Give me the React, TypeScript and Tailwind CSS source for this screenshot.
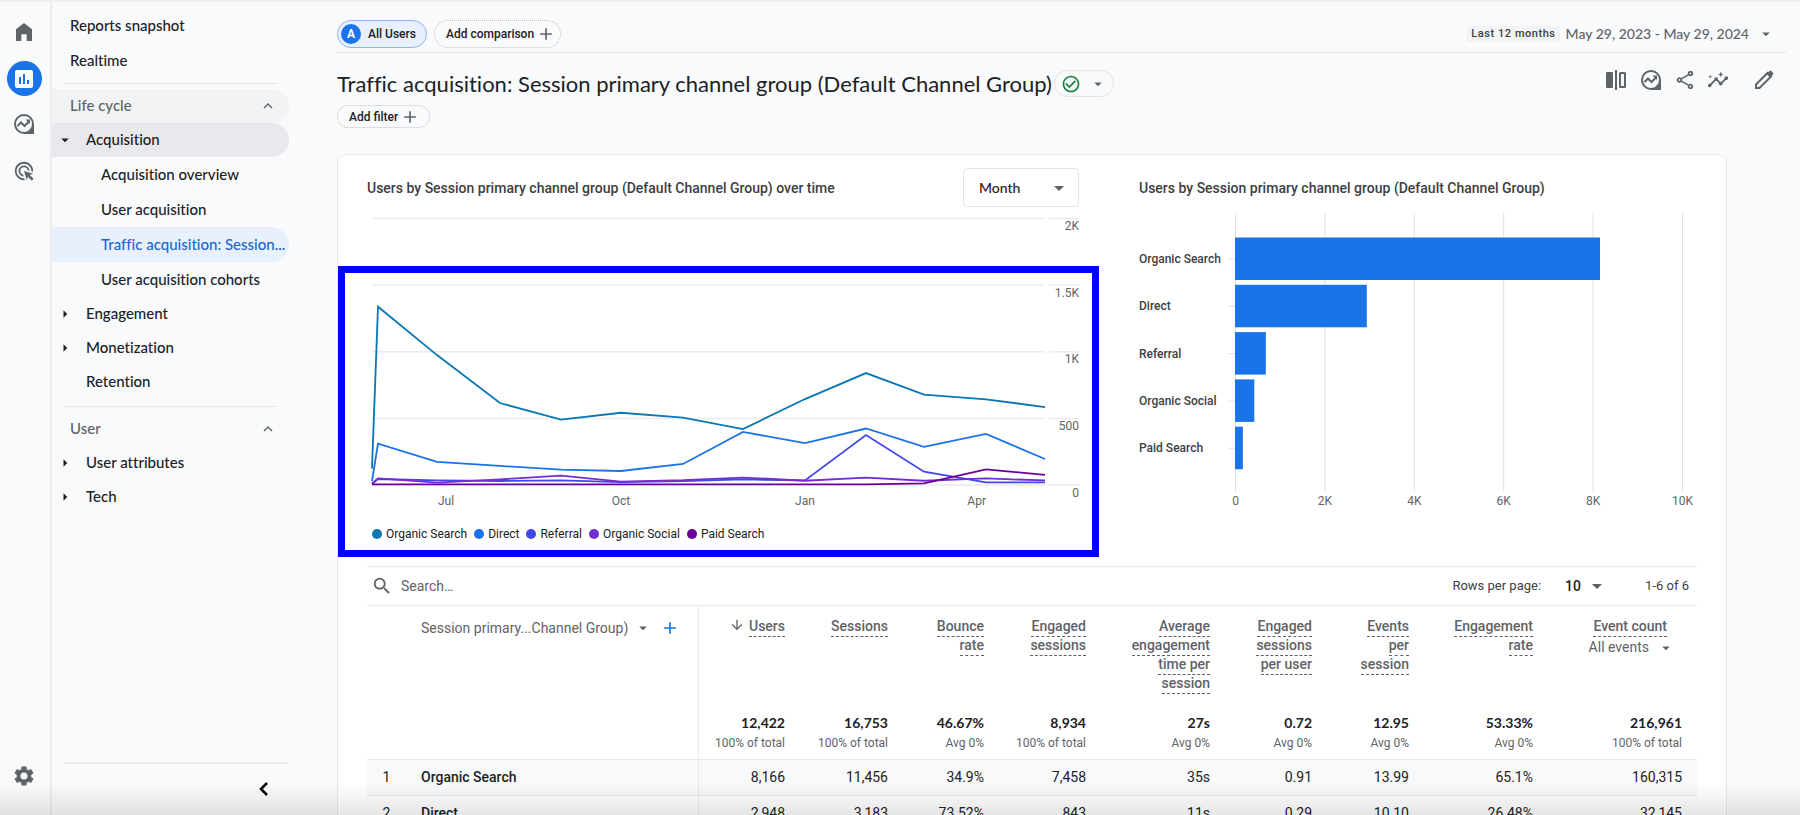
import { useState } from "react";
import { MdAdsClick, MdAdd, MdArrowDownward, MdArrowDropDown, MdArrowRight, MdCheckCircleOutline, MdInsertChart, MdInsights, MdKeyboardArrowUp, MdOutlineShare, MdSearch, MdSettings } from "react-icons/md";

type Series = { name: string; color: string; values: number[] };

const series: Series[] = [
  { name: "Organic Search", color: "#0877b3", values: [124, 1338, 975, 615, 490, 542, 505, 420, 645, 840, 679, 643, 585] },
  { name: "Direct", color: "#1a73e8", values: [30, 310, 173, 143, 115, 105, 158, 398, 315, 424, 287, 383, 195] },
  { name: "Referral", color: "#4346e8", values: [8, 45, 34, 30, 34, 22, 30, 42, 34, 375, 100, 19, 19] },
  { name: "Organic Social", color: "#722ed1", values: [12, 50, 18, 42, 71, 26, 36, 56, 32, 56, 32, 49, 34] },
  { name: "Paid Search", color: "#6b0099", values: [5, 5, 5, 5, 5, 5, 5, 5, 5, 5, 12, 117, 76] },
];

const xs = [5, 11, 70, 133, 194, 254, 316, 376, 438, 499, 557, 619, 678];

const bars = [
  { name: "Organic Search", value: 8166 },
  { name: "Direct", value: 2948 },
  { name: "Referral", value: 690 },
  { name: "Organic Social", value: 432 },
  { name: "Paid Search", value: 176 },
];

const columns = [
  { label: "Users", total: "12,422", note: "100% of total", sorted: true },
  { label: "Sessions", total: "16,753", note: "100% of total" },
  { label: "Bounce rate", total: "46.67%", note: "Avg 0%" },
  { label: "Engaged sessions", total: "8,934", note: "100% of total" },
  { label: "Average engagement time per session", total: "27s", note: "Avg 0%" },
  { label: "Engaged sessions per user", total: "0.72", note: "Avg 0%" },
  { label: "Events per session", total: "12.95", note: "Avg 0%" },
  { label: "Engagement rate", total: "53.33%", note: "Avg 0%" },
];

const rows = [
  { name: "Organic Search", cells: ["8,166", "11,456", "34.9%", "7,458", "35s", "0.91", "13.99", "65.1%", "160,315"] },
  { name: "Direct", cells: ["2,948", "3,183", "73.52%", "843", "11s", "0.29", "10.10", "26.48%", "32,145"] },
];

export default function App() {
  return (
    <div className="h-screen flex overflow-hidden relative bg-[#f9fafc] border-t-2 border-[#eeeff1] font-[Roboto,sans-serif] text-sm text-[#202124]">
      <Rail />
      <Sidebar />
      <main className="flex-1 min-w-0 pl-12 pr-[14px]">
        <TopBar />
        <TitleBar />
        <section className="mt-[26px] mr-[59px] bg-white border border-[#e8eaed] rounded-lg px-[29px] pt-[13px]">
          <div className="grid grid-cols-[712fr_558fr] gap-[60px]">
            <LineChart />
            <BarChart />
          </div>
          <TableToolbar />
          <DataTable />
        </section>
      </main>
      <div className="absolute inset-x-0 bottom-0 h-8 bg-linear-to-t from-black/10 to-transparent pointer-events-none" />
    </div>
  );
}

function Rail() {
  return (
    <nav aria-label="Main" className="w-[52px] shrink-0 border-r-2 border-[#ececee] flex flex-col items-center pt-[18px] pb-[27px] pr-0.5 text-[#5f6368]">
      <a href="#home" aria-label="Home">
        <svg viewBox="0 0 24 24" className="size-6" fill="currentColor">
          <path d="M4 21V9.200L12 3l8 6.200V21h-5.300v-6.800H9.300V21z" />
        </svg>
      </a>
      <a href="#reports" aria-label="Reports" className="mt-[17px] size-[35px] rounded-full bg-[#1a73e8] text-white flex items-center justify-center">
        <MdInsertChart className="size-6" />
      </a>
      <a href="#explore" aria-label="Explore" className="mt-4">
        <ExploreIcon />
      </a>
      <a href="#advertising" aria-label="Advertising" className="mt-6">
        <MdAdsClick className="size-[22px]" />
      </a>
      <a href="#admin" aria-label="Admin" className="mt-auto">
        <MdSettings className="size-6" />
      </a>
    </nav>
  );
}

function Sidebar() {
  return (
    <aside className="w-[237px] shrink-0 flex flex-col pt-1.5 font-[Lato,sans-serif] text-[15px] font-medium [font-variant-ligatures:none]">
      <a href="#snapshot" className="h-[35px] flex items-center pl-[18px]">Reports snapshot</a>
      <a href="#realtime" className="h-[35px] flex items-center pl-[18px]">Realtime</a>
      <hr className="my-[5px] mx-3 border-[#e3e5e8]" />
      <SectionHeader label="Life cycle" active />
      <NavGroup label="Acquisition" open />
      <NavLeaf label="Acquisition overview" />
      <NavLeaf label="User acquisition" />
      <NavLeaf label="Traffic acquisition: Session..." active />
      <NavLeaf label="User acquisition cohorts" />
      <NavGroup label="Engagement" />
      <NavGroup label="Monetization" />
      <NavGroup label="Retention" plain />
      <hr className="mt-[7px] mb-[5px] mx-3 border-[#e3e5e8]" />
      <SectionHeader label="User" />
      <NavGroup label="User attributes" />
      <NavGroup label="Tech" />
      <div className="mt-auto ml-3 border-t-2 border-[#ececee] h-[53px] flex justify-end pt-[13px] pr-[13px]">
        <button aria-label="Collapse navigation" className="size-6 text-black">
          <svg viewBox="0 0 24 24" className="size-6" fill="none" stroke="currentColor" strokeWidth="2.500">
            <path d="M15 6l-6 6 6 6" />
          </svg>
        </button>
      </div>
    </aside>
  );
}

function SectionHeader({ label, active }: { label: string; active?: boolean }) {
  return (
    <button className={`h-[34px] pl-[18px] pr-3 flex items-center justify-between rounded-r-full text-[#5f6368] ${active ? "bg-[#f1f3f4]" : ""}`}>
      {label}
      <MdKeyboardArrowUp className="size-[18px]" />
    </button>
  );
}

function NavGroup({ label, open, plain }: { label: string; open?: boolean; plain?: boolean }) {
  return (
    <button className={`h-[34px] pl-1 flex items-center rounded-r-full ${open ? "bg-[#e8e9ec]" : ""}`}>
      <span className="w-[30px]">
        {!plain && (open ? <MdArrowDropDown className="size-[18px]" /> : <MdArrowRight className="size-[18px]" />)}
      </span>
      {label}
    </button>
  );
}

function NavLeaf({ label, active }: { label: string; active?: boolean }) {
  return (
    <a href="#report" className={`h-[35px] pl-[49px] flex items-center rounded-r-full whitespace-nowrap ${active ? "bg-[#e8f0fe] text-[#1967d2]" : ""}`}>
      {label}
    </a>
  );
}

function TopBar() {
  return (
    <header className="pt-[18px] pb-1 flex items-center justify-between border-b border-[#e3e5e8]">
      <div className="flex gap-[7px]">
        <button className="h-7 flex items-center gap-[7px] pl-[3px] pr-2.5 rounded-full border border-[#8ab4f8] bg-[#e8f0fe] text-xs font-medium">
          <span className="size-5 rounded-full bg-[#1a73e8] text-white flex items-center justify-center font-bold">A</span>
          All Users
        </button>
        <button className="h-7 flex items-center gap-0.5 pl-[11px] pr-1 rounded-full border border-dotted border-[#bdc1c6] text-xs font-medium">
          Add comparison
          <MdAdd className="size-5 text-[#5f6368]" />
        </button>
      </div>
      <button className="flex items-center text-[#5f6368] pr-[11px]">
        <span className="bg-[#f1f3f4] px-1 text-[11px] font-medium tracking-wider text-[#3c4043]">Last 12 months</span>
        <span className="ml-1.5 mr-2 font-[Lato,sans-serif] font-medium">May 29, 2023 - May 29, 2024</span>
        <MdArrowDropDown className="size-[18px]" />
      </button>
    </header>
  );
}

function TitleBar() {
  return (
    <>
      <div className="pt-[15px] flex items-start justify-between">
        <div className="mt-0.5 h-[27px] flex items-center gap-0.5">
          <h1 className="font-[Lato,sans-serif] text-[22px] whitespace-nowrap [font-variant-ligatures:none]">Traffic acquisition: Session primary channel group (Default Channel Group)</h1>
          <button aria-label="Report status" className="h-[27px] flex items-center gap-2 pl-1.5 pr-1.5 rounded-full border border-[#e3e5e8] text-[#5f6368]">
            <MdCheckCircleOutline className="size-5 text-[#188038]" />
            <MdArrowDropDown className="size-[18px]" />
          </button>
        </div>
        <div className="flex items-center gap-[11px] pr-[10px] text-[#5f6368]">
          <button aria-label="Edit comparisons">
            <svg viewBox="0 0 24 24" className="size-6">
              <rect x="2" y="4" width="7" height="16" rx="1" fill="currentColor" />
              <path d="M12 2v20" stroke="currentColor" strokeWidth="2" />
              <rect x="16" y="5" width="5" height="14" rx="0.500" fill="none" stroke="currentColor" strokeWidth="2" />
            </svg>
          </button>
          <button aria-label="Explore"><ExploreIcon /></button>
          <button aria-label="Share this report"><MdOutlineShare className="size-[22px]" /></button>
          <button aria-label="Insights"><MdInsights className="size-[22px]" /></button>
          <button aria-label="Customize report" className="ml-3">
            <svg viewBox="0 0 24 24" className="size-6" fill="none" stroke="currentColor" strokeWidth="2">
              <path d="M4 20v-3.500L15.500 5l3.500 3.500L7.500 20z" />
              <path d="M14.500 6l3-3c.5-.5 1.300-.5 1.800 0l1.700 1.700c.5.5.5 1.300 0 1.800l-3 3z" fill="currentColor" stroke="none" />
            </svg>
          </button>
        </div>
      </div>
      <button className="mt-2 h-[23px] flex items-center gap-0.5 pl-[11px] pr-[9px] rounded-full border border-dotted border-[#bdc1c6] text-xs font-medium">
        Add filter
        <MdAdd className="size-5 text-[#5f6368]" />
      </button>
    </>
  );
}

function ExploreIcon() {
  return (
    <svg viewBox="0 0 24 24" className="size-6" fill="none" stroke="currentColor" strokeWidth="2">
      <circle cx="12" cy="12" r="9" />
      <path d="M21 12v9h-9" />
      <path d="M5.500 14l3.500-3.500 3.500 3.500L17 9.500" />
      <path d="M13.500 7.500H18V12z" fill="currentColor" stroke="none" />
      <circle cx="18.700" cy="18.700" r="1.800" fill="currentColor" stroke="none" />
    </svg>
  );
}

function LineChart() {
  const [period, setPeriod] = useState("Month");
  const y = (v: number) => 275 - (v * 266.5) / 2000;

  return (
    <div className="relative">
      <div className="h-[39px] flex items-center justify-between">
        <h2 className="font-medium text-[#3c4043]">Users by Session primary channel group (Default Channel Group) over time</h2>
        <div className="relative">
          <select aria-label="Period" value={period} onChange={(e) => setPeriod(e.target.value)} className="appearance-none w-[116px] h-[39px] pl-[15px] rounded border border-[#e3e5e8] bg-white font-[Lato,sans-serif] font-medium">
            <option>Month</option>
          </select>
          <MdArrowDropDown className="absolute right-2 top-2 size-6 text-[#5f6368] pointer-events-none" />
        </div>
      </div>
      <svg viewBox="0 0 712 306" className="mt-[3px] w-full" role="img" aria-label="Users over time">
        {[2000, 1500, 1000, 500, 0].map((v) => (
          <g key={v}>
            <path d={`M5 ${y(v)}H678M682 ${y(v)}H712`} stroke="#ececee" strokeWidth="1.500" />
            <text x="712" y={y(v) + 11.5} textAnchor="end" fontSize="12" fill="#5f6368">
              {v >= 1000 ? `${v / 1000}K` : v}
            </text>
          </g>
        ))}
        {[70, 254, 438, 619].map((x) => (
          <path key={x} d={`M${x} 275v5`} stroke="#ececee" />
        ))}
        {series.map((s) => (
          <polyline key={s.name} fill="none" stroke={s.color} strokeWidth="1.800" points={s.values.map((v, i) => `${xs[i]},${y(v)}`).join(" ")} />
        ))}
        <g fontSize="12" fill="#5f6368">
          <text x="71" y="295">Jul</text>
          <text x="254" y="295" textAnchor="middle">Oct</text>
          <text x="438" y="295" textAnchor="middle">Jan</text>
          <text x="619" y="295" textAnchor="end">Apr</text>
        </g>
      </svg>
      <ul className="h-9 pl-[5px] flex items-center gap-[7px] text-xs">
        {series.map((s) => (
          <li key={s.name} className="flex items-center gap-1">
            <span className="size-2.5 rounded-full" style={{ backgroundColor: s.color }} />
            {s.name}
          </li>
        ))}
      </ul>
      <div className="absolute top-[98px] -bottom-[5px] -left-[29px] -right-[20px] border-7 border-[#0000ff] pointer-events-none" />
    </div>
  );
}

function BarChart() {
  const x = (v: number) => 96.5 + v * 0.0447;

  return (
    <div>
      <div className="h-[39px] flex items-center">
        <h2 className="font-medium text-[#3c4043]">Users by Session primary channel group (Default Channel Group)</h2>
      </div>
      <svg viewBox="0 0 558 302" className="mt-[3px] w-full" role="img" aria-label="Users by channel group">
        {[0, 2000, 4000, 6000, 8000, 10000].map((v) => (
          <g key={v}>
            <path d={`M${x(v)} 3v279`} stroke="#dfe1e5" />
            <text x={x(v)} y="295" textAnchor="middle" fontSize="12" fill="#5f6368">
              {v === 0 ? 0 : `${v / 1000}K`}
            </text>
          </g>
        ))}
        {bars.map((b, i) => (
          <g key={b.name}>
            <path d={`M90 ${49 + i * 47.300}h6`} stroke="#dfe1e5" />
            <rect x="96" y={27.500 + i * 47.300} width={b.value * 0.0447} height="42.500" fill="#1a73e8" />
            <text x="0" y={53 + i * 47.300} fontSize="12" fontWeight="500" fill="#3c4043">{b.name}</text>
          </g>
        ))}
      </svg>
    </div>
  );
}

function TableToolbar() {
  const [search, setSearch] = useState("");

  return (
    <div className="mt-[14px] h-10 border-y border-[#e8eaed] flex items-center text-[13px] text-[#5f6368]">
      <label htmlFor="search" aria-label="Search" className="pl-1">
        <MdSearch className="size-[22px]" />
      </label>
      <input id="search" value={search} onChange={(e) => setSearch(e.target.value)} placeholder="Search…" className="flex-1 ml-2 text-sm outline-none placeholder:text-[#5f6368]" />
      <label htmlFor="page-size" className="text-[#3c4043]">Rows per page:</label>
      <div className="relative ml-6">
        <select id="page-size" className="appearance-none w-11 text-sm font-medium text-[#202124]">
          <option>10</option>
        </select>
        <MdArrowDropDown className="absolute right-0 -top-0.5 size-6 text-[#5f6368] pointer-events-none" />
      </div>
      <span className="ml-9 mr-2 text-[#3c4043]">1-6 of 6</span>
    </div>
  );
}

function DataTable() {
  return (
    <table className="w-full table-fixed">
      <colgroup>
        <col className="w-[331px]" />
        <col className="w-[102px]" />
        <col className="w-[103px]" />
        <col className="w-[96px]" />
        <col className="w-[102px]" />
        <col className="w-[124px]" />
        <col className="w-[102px]" />
        <col className="w-[97px]" />
        <col className="w-[124px]" />
        <col />
      </colgroup>
      <thead>
        <tr className="align-top text-right text-[#5f6368]">
          <th className="h-[104px] pt-3 pl-[54px] font-normal border-r border-[#e8eaed]">
            <div className="flex items-center">
              <button className="flex items-center gap-1.5">
                Session primary...Channel Group)
                <MdArrowDropDown className="size-[18px]" />
              </button>
              <button aria-label="Add dimension" className="ml-2 text-[#1a73e8]">
                <MdAdd className="size-5" />
              </button>
            </div>
          </th>
          {columns.map((c) => (
            <th key={c.label} className="pt-[11px] pl-5 pr-[15px] font-medium leading-[19px]">
              {c.sorted && <MdArrowDownward className="inline size-4 mr-1 -mt-1" />}
              <span className="pb-0.5 border-b border-dashed border-[#5f6368]">{c.label}</span>
            </th>
          ))}
          <th className="pt-[11px] pr-[30px] font-medium leading-[19px]">
            <span className="pb-0.5 border-b border-dashed border-[#5f6368]">Event count</span>
            <button className="mt-0.5 ml-auto -mr-2 flex items-center gap-2 font-normal">
              All events
              <MdArrowDropDown className="size-[18px]" />
            </button>
          </th>
        </tr>
        <tr className="text-right border-b border-[#e8eaed]">
          <td className="border-r border-[#e8eaed]" />
          {[...columns, { label: "Event count", total: "216,961", note: "100% of total" }].map((c) => (
            <td key={c.label} className="h-[49px] pr-[15px] pt-[3px] align-top">
              <div className="font-[Lato,sans-serif] text-sm leading-[20px] font-bold">{c.total}</div>
              <div className="text-xs leading-[20px] text-[#5f6368]">{c.note}</div>
            </td>
          ))}
        </tr>
      </thead>
      <tbody>
        {rows.map((r, i) => (
          <tr key={r.name} className="h-9 text-right border-b border-[#e8eaed] first:bg-[#f8f9fa]">
            <td className="text-left border-r border-[#e8eaed]">
              <div className="flex">
                <span className="w-[39px] text-center">{i + 1}</span>
                <span className="ml-[15px] font-medium">{r.name}</span>
              </div>
            </td>
            {r.cells.map((c, j) => (
              <td key={j} className="pr-[15px]">{c}</td>
            ))}
          </tr>
        ))}
      </tbody>
    </table>
  );
}
